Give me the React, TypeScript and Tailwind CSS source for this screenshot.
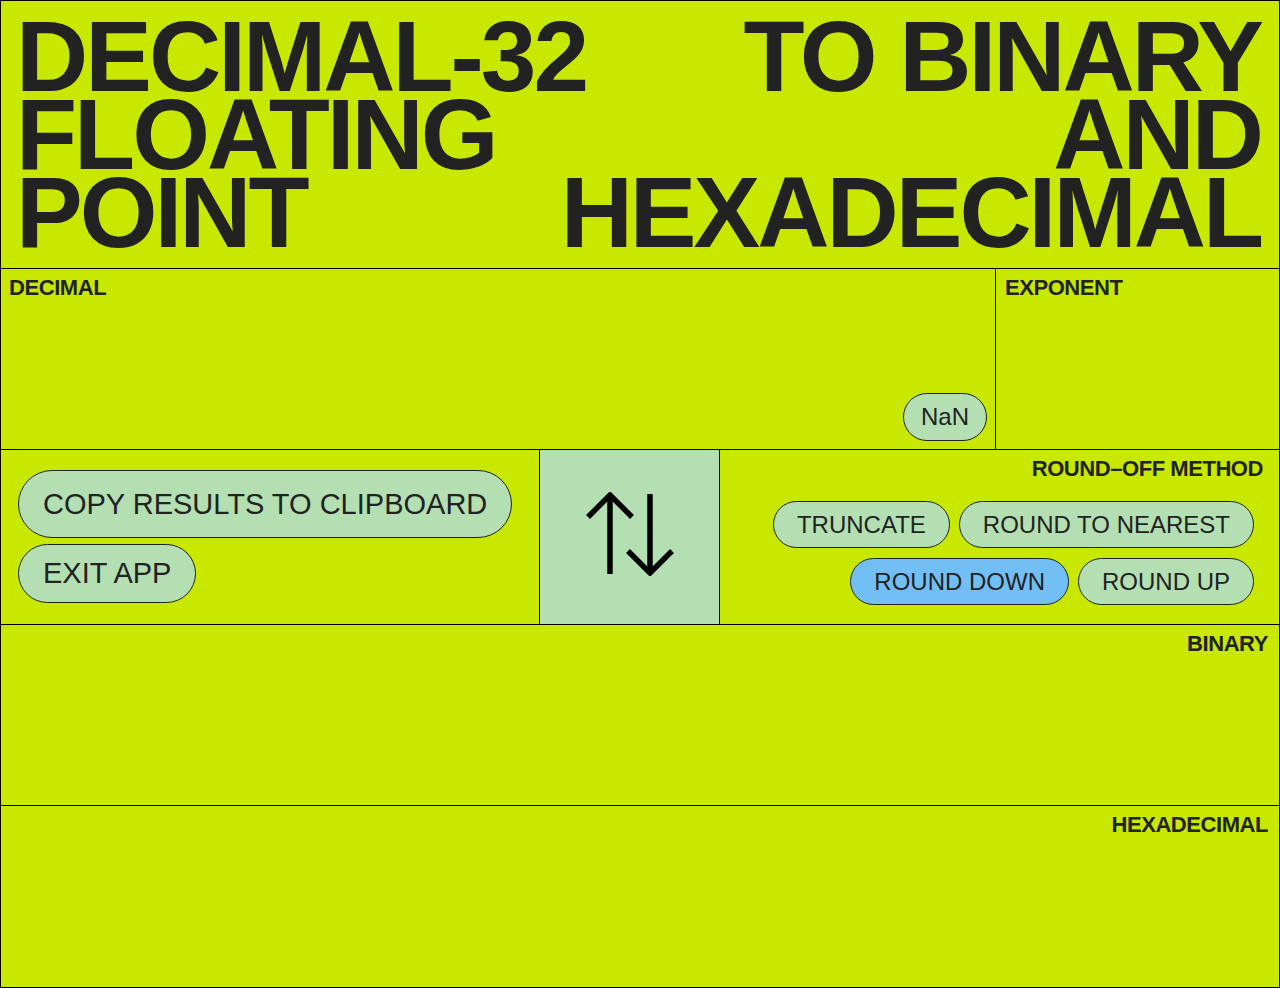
import { ReactNode } from "react";

const pill =
  "rounded-full border border-[#222] bg-[#b3dfb3] text-[#222] leading-none flex items-center";

const titleRows: [string, string][] = [
  ["DECIMAL-32", "TO BINARY"],
  ["FLOATING", "AND"],
  ["POINT", "HEXADECIMAL"],
];

function Label({ children, right }: { children: ReactNode; right?: boolean }) {
  return (
    <p
      className={
        "text-[22px] font-bold leading-none tracking-[-0.02em] text-[#222] " +
        (right ? "text-right" : "")
      }
    >
      {children}
    </p>
  );
}

function SwapIcon() {
  return (
    <svg width="90" height="84" viewBox="0 0 90 84" fill="none" stroke="#000" strokeWidth="5.5" strokeLinejoin="miter">
      <path d="M25 4 V82" />
      <path d="M3 25 L25 3 L47 25" />
      <path d="M65 2 V79" />
      <path d="M43 59 L65 81 L87 59" />
    </svg>
  );
}

export default function App() {
  const methods = ["TRUNCATE", "ROUND TO NEAREST", "ROUND DOWN", "ROUND UP"];
  const selected = "ROUND DOWN";

  return (
    <div className="w-[1280px] h-[988px] bg-[#c8e800] border border-black flex flex-col font-['Liberation_Sans',Arial,sans-serif] text-[#222]">
      {/* Title */}
      <header className="h-[268px] border-b border-black pl-[15px] pr-[18px] pt-[16px] text-[100px] font-bold leading-[78px] tracking-[-0.03em] whitespace-nowrap">
        <h1>
          {titleRows.map(([l, r]) => (
            <span key={l} className="flex justify-between">
              <span>{l}</span>
              <span>{r}</span>
            </span>
          ))}
        </h1>
      </header>

      {/* Decimal / Exponent */}
      <section className="h-[181px] border-b border-black flex">
        <div className="flex-1 border-r border-black px-2 pt-[8px] pb-[8px] flex flex-col justify-between">
          <Label>DECIMAL</Label>
          <div className="flex justify-end">
            <span className={pill + " h-[48px] px-[17px] text-[24px]"}>NaN</span>
          </div>
        </div>
        <div className="w-[283px] px-[9px] pt-[8px]">
          <Label>EXPONENT</Label>
        </div>
      </section>

      {/* Controls */}
      <section className="h-[175px] border-b border-black flex">
        <div className="w-[539px] border-r border-black pl-[17px] pt-5 flex flex-col items-start gap-[6px]">
          <button className={pill + " h-[68px] px-6 text-[29px]"}>COPY RESULTS TO CLIPBOARD</button>
          <button className={pill + " h-[59px] px-6 text-[29px]"}>EXIT APP</button>
        </div>
        <div className="w-[180px] border-r border-black bg-[#b3dfb3] flex items-center justify-center pb-[6px]">
          <SwapIcon />
        </div>
        <div className="flex-1 pr-[16px] pt-[8px]">
          <Label right>ROUND–OFF METHOD</Label>
          <div className="mt-[21px] pr-[9px] flex flex-wrap justify-end gap-x-[9px] gap-y-[10px] ml-[40px]">
            {methods.map((m) => (
              <button
                key={m}
                className={
                  "rounded-full border border-[#222] h-[47px] px-[23px] text-[24px] leading-none text-[#222] " +
                  (m === selected ? "bg-[#72bff5]" : "bg-[#b3dfb3]")
                }
              >
                {m}
              </button>
            ))}
          </div>
        </div>
      </section>

      {/* Binary */}
      <section className="h-[181px] border-b border-black px-[11px] pt-[8px]">
        <Label right>BINARY</Label>
      </section>

      {/* Hexadecimal */}
      <section className="flex-1 px-[11px] pt-[8px]">
        <Label right>HEXADECIMAL</Label>
      </section>
    </div>
  );
}
